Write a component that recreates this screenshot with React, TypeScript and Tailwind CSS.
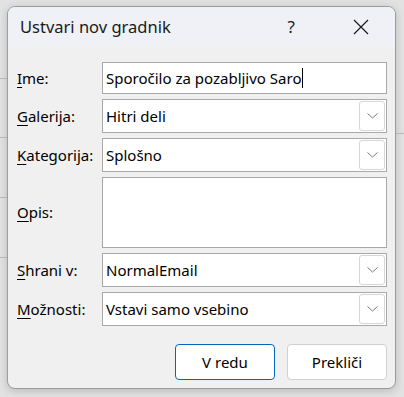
import React from "react";

const font = { fontFamily: '"Noto Sans", "Open Sans", sans-serif' };

function Chevron() {
  return (
    <svg width="11" height="6" viewBox="0 0 11 6" fill="none">
      <path d="M0.5 0.5 L5.5 5 L10.5 0.5" stroke="#7a7a7a" strokeWidth="1" />
    </svg>
  );
}

function Label({ first, rest }: { first: string; rest: string }) {
  return (
    <div className="w-[94px] shrink-0 pl-[9px] text-[15px] leading-none text-black">
      <span className="underline decoration-[1px] underline-offset-[3px]">{first}</span>
      {rest}
    </div>
  );
}

function Select({ value }: { value: string }) {
  return (
    <div className="flex h-[34px] w-[285px] items-center border border-[#a9a9a9] bg-white pl-[3px] pr-[1px]">
      <span className="flex-1 text-[15px] text-black">{value}</span>
      <div className="flex h-[30px] w-[26px] items-center justify-center rounded-[3px] border border-[#d6d6d6] bg-white">
        <Chevron />
      </div>
    </div>
  );
}

export default function App() {
  return (
    <div className="relative h-[397px] w-[404px] overflow-hidden bg-[#e2e2e2]" style={font}>
      <div className="absolute left-0 top-[78px] h-px w-[7px] bg-[#b8b8b8]" />
      <div className="absolute left-0 top-[137px] h-px w-[7px] bg-[#b8b8b8]" />
      <div className="absolute left-0 top-[197px] h-px w-[7px] bg-[#b8b8b8]" />
      <div className="absolute left-0 top-[257px] h-px w-[7px] bg-[#b8b8b8]" />
      <div className="absolute right-0 top-[133px] h-px w-[8px] bg-[#b8b8b8]" />
      <div className="pl-[7px] pt-[6px]">
        <div className="flex h-[383px] w-[389px] flex-col overflow-hidden rounded-[8px] border border-[#9c9c9c] bg-[#f0f0f0] shadow-[0_2px_8px_rgba(0,0,0,0.18)]">
          <div className="flex h-[40px] shrink-0 items-center bg-[#eff1f6] pl-[12px]">
            <span className="text-[16.5px] text-[#1a1a1a]">Ustvari nov gradnik</span>
            <span className="ml-auto mr-[58px] text-[17px] text-[#1a1a1a]">?</span>
            <svg className="mr-[26px]" width="16" height="16" viewBox="0 0 16 16" fill="none">
              <path d="M1 1 L15 15 M15 1 L1 15" stroke="#1a1a1a" strokeWidth="1.2" />
            </svg>
          </div>
          <div className="flex flex-col gap-[5px] pt-[15px]">
            <div className="flex items-center">
              <Label first="I" rest="me:" />
              <div className="relative flex h-[32px] w-[285px] items-center border border-[#a9a9a9] bg-white pl-[3px]">
                <span className="text-[15px] text-black">Sporočilo za pozabljivo Saro</span>
                <span className="ml-px h-[20px] w-px bg-black" />
              </div>
            </div>
            <div className="flex items-center">
              <Label first="G" rest="alerija:" />
              <Select value="Hitri deli" />
            </div>
            <div className="flex items-center">
              <Label first="K" rest="ategorija:" />
              <Select value="Splošno" />
            </div>
            <div className="flex items-center">
              <Label first="O" rest="pis:" />
              <div className="h-[71px] w-[285px] border border-[#a9a9a9] bg-white" />
            </div>
            <div className="flex items-center">
              <Label first="S" rest="hrani v:" />
              <Select value="NormalEmail" />
            </div>
            <div className="flex items-center">
              <Label first="M" rest="ožnosti:" />
              <Select value="Vstavi samo vsebino" />
            </div>
          </div>
          <div className="flex justify-end gap-[12px] pr-[8px] pt-[18px]">
            <button className="flex h-[36px] w-[100px] items-center justify-center rounded-[4px] border border-[#0067c0] bg-white text-[15px] text-black">
              V redu
            </button>
            <button className="flex h-[36px] w-[100px] items-center justify-center rounded-[4px] border border-[#d0d0d0] bg-white text-[15px] text-black">
              Prekliči
            </button>
          </div>
        </div>
      </div>
    </div>
  );
}
